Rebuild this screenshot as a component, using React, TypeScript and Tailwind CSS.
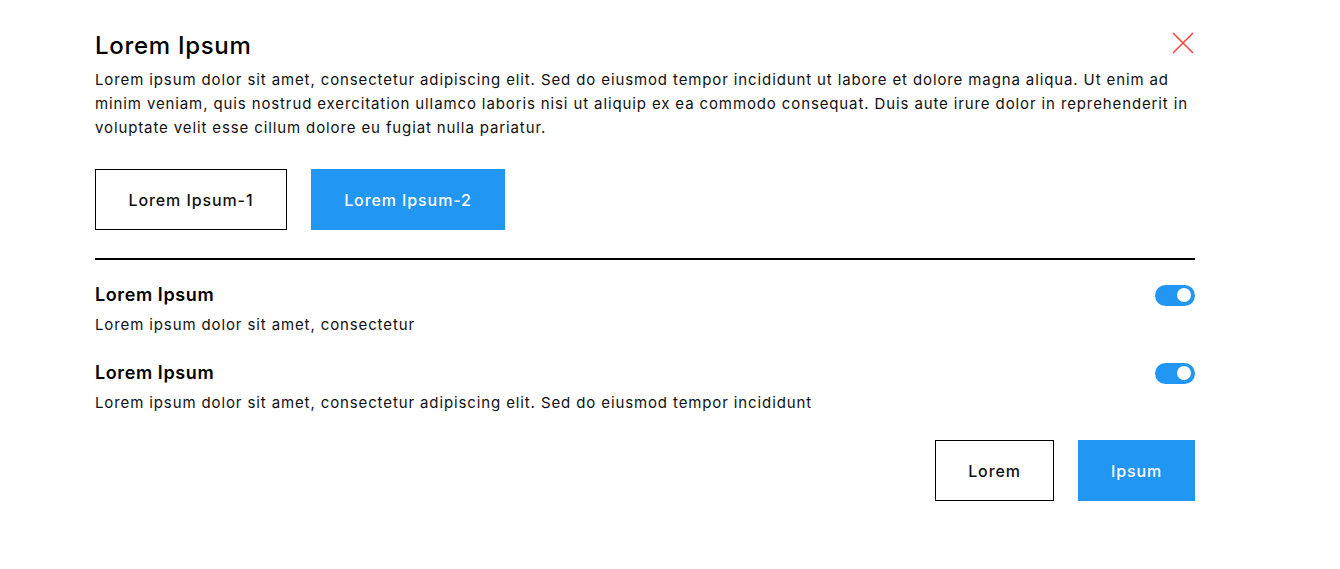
import React, { useState } from 'react';

const Toggle: React.FC<{ on: boolean; onChange: () => void }> = ({ on, onChange }) => {
  return (
    <button
      onClick={onChange}
      className={`relative w-[40px] h-[21px] rounded-full ${on ? 'bg-[#2196f3]' : 'bg-gray-300'}`}
    >
      <span
        className={`absolute top-[3.5px] w-[14px] h-[14px] rounded-full bg-white ${on ? 'left-[22px]' : 'left-[4px]'}`}
      />
    </button>
  );
};

const App: React.FC = () => {
  const [first, setFirst] = useState(true);
  const [second, setSecond] = useState(true);

  return (
    <div className="w-full h-[569px] bg-white text-[#111] font-['Inter','Noto_Sans',sans-serif]">
      <div className="w-[1195px] pl-[95px] pt-[31px]">
        <div className="flex justify-between items-start">
          <h1 className="text-[24px] leading-[30px] font-medium tracking-[0.7px] text-black">Lorem Ipsum</h1>
          <button className="mt-[1px] mr-[1px] w-[22px] h-[22px]">
            <svg viewBox="0 0 22 22" width="22" height="22">
              <path d="M1 1 L21 21 M21 1 L1 21" stroke="#f44336" strokeWidth="1.5" fill="none" />
            </svg>
          </button>
        </div>
        <p className="mt-[7px] text-[15px] leading-[24px] tracking-[0.88px]">
          Lorem ipsum dolor sit amet, consectetur adipiscing elit. Sed do eiusmod tempor incididunt ut labore et dolore magna aliqua. Ut enim ad
          <br />
          minim veniam, quis nostrud exercitation ullamco laboris nisi ut aliquip ex ea commodo consequat. Duis aute irure dolor in reprehenderit in
          <br />
          voluptate velit esse cillum dolore eu fugiat nulla pariatur.
        </p>

        <div className="mt-[29px] flex gap-[24px]">
          <button className="w-[192px] h-[61px] border border-black text-[16px] font-medium tracking-[0.9px]">
            Lorem Ipsum-1
          </button>
          <button className="w-[194px] h-[61px] bg-[#2196f3] text-white text-[16px] font-medium tracking-[0.9px]">
            Lorem Ipsum-2
          </button>
        </div>

        <div className="mt-[28px] h-[2px] bg-black" />

        <div className="mt-[23px]">
          <div className="flex justify-between items-center">
            <h2 className="text-[18px] leading-[24px] font-semibold tracking-[0.6px] text-black">Lorem Ipsum</h2>
            <Toggle on={first} onChange={() => setFirst(!first)} />
          </div>
          <p className="mt-[6px] text-[15px] leading-[24px] tracking-[0.88px]">
            Lorem ipsum dolor sit amet, consectetur
          </p>
        </div>

        <div className="mt-[24px]">
          <div className="flex justify-between items-center">
            <h2 className="text-[18px] leading-[24px] font-semibold tracking-[0.6px] text-black">Lorem Ipsum</h2>
            <Toggle on={second} onChange={() => setSecond(!second)} />
          </div>
          <p className="mt-[6px] text-[15px] leading-[24px] tracking-[0.88px]">
            Lorem ipsum dolor sit amet, consectetur adipiscing elit. Sed do eiusmod tempor incididunt
          </p>
        </div>

        <div className="mt-[25px] flex justify-end gap-[24px]">
          <button className="w-[119px] h-[61px] border border-black text-[16px] font-medium tracking-[0.9px]">
            Lorem
          </button>
          <button className="w-[117px] h-[61px] bg-[#2196f3] text-white text-[16px] font-medium tracking-[0.9px]">
            Ipsum
          </button>
        </div>
      </div>
    </div>
  );
};

export default App;
